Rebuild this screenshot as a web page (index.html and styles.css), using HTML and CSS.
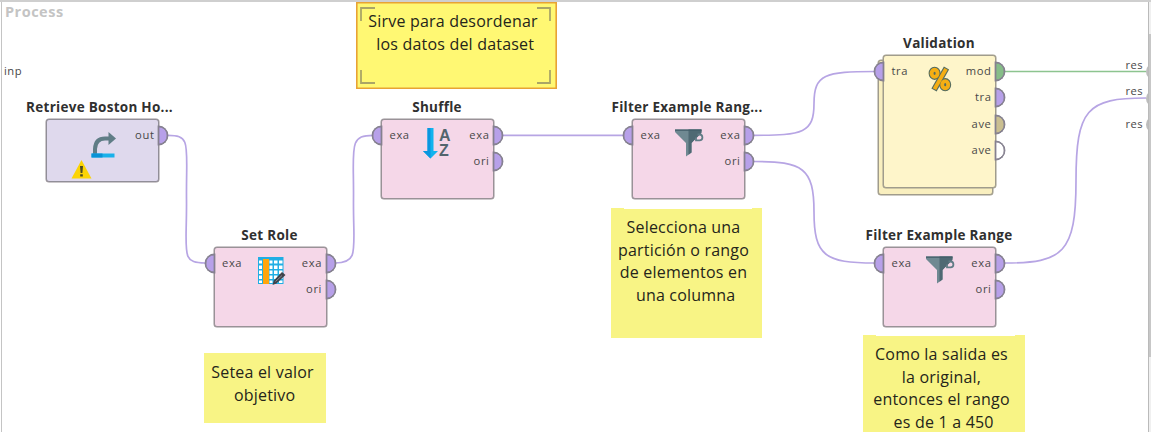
FILE: index.html
```html
<!DOCTYPE html>
<html lang="es">
<head>
<meta charset="utf-8">
<title>Process</title>
<link rel="stylesheet" href="styles.css">
</head>
<body>
<main class="canvas">
  <h1 class="process">Process</h1>
  <svg class="wires" width="1151" height="432" viewBox="0 0 1151 432">
    <g class="data">
      <path d="M168 135.300C192 135.300 186 145 186.500 199S180 263 205 263"/>
      <path d="M335 263C360 263 353 250 353.500 199S348 135.300 373 135.300"/>
      <path d="M503 135.300H624"/>
      <path d="M754 135.300C803 135.300 814 133 814 103.500S825 71.500 875 71.500"/>
      <path d="M754 161.500C803 161.500 814 168 814 212S825 263 875 263"/>
      <path d="M1005 263C1063 263 1076 253 1076 181S1087 98 1146 98"/>
    </g>
    <path class="model" d="M1005 71.500H1146"/>
  </svg>

  <span class="port-label inp">inp</span>
  <span class="port-label res res-1">res</span>
  <span class="port-label res res-2">res</span>
  <span class="port-label res res-3">res</span>

  <section class="node retrieve">
    <h2 class="title">Retrieve Boston Ho...</h2>
    <div class="box">
      <ul class="ports right"><li>out<i></i></li></ul>
      <svg class="icon" width="26" height="28" viewBox="0 0 26 28">
        <path d="M4 22V17Q4.500 6.500 14 6.500H18" fill="none" stroke="#607d86" stroke-width="4"/>
        <path d="M17.500 0l7.500 6.500L17.500 13z" fill="#607d86"/>
        <path d="M.500 21.500h23v4H.500z" fill="#19b1ea"/><path d="M.500 21.500h11v4H.500z" fill="#0992d6"/>
      </svg>
      <svg class="warning" width="21" height="19" viewBox="0 0 21 19">
        <path d="M10.500 0L20.500 18.500H.500z" fill="#fbd405"/>
        <path d="M9 6h3l-.6 7H9.600zM9.200 14.200h2.600v2.300H9.200z" fill="#4d4b20"/>
      </svg>
    </div>
  </section>

  <section class="node set-role">
    <h2 class="title">Set Role</h2>
    <div class="box">
      <ul class="ports left"><li>exa<i></i></li></ul>
      <svg class="icon" width="29" height="29" viewBox="0 0 29 29">
        <path d="M1 1h25.500v27H1z" fill="#20aee4"/>
        <path d="M2 4.500h3v3H2zm0 5h3v3.500H2zm0 5h3v3.500H2zm0 5h3v3.500H2zm0 5h3v2.500H2zM12.500 4.500h3v3h-3zm0 5h3v3.500h-3zm0 5h3v3.500h-3zm0 5h3v3.500h-3zm0 5h3v2.500h-3zM17 4.500h3.500v3H17zm0 5h3.500v3.500H17zm0 5h3.500v3.500H17zm0 5h3.500v3.500H17zm0 5h3.500v2.500H17zM22 4.500h3.500v3H22zm0 5h3.500v3.500H22zm0 5h3.500v3.500H22zm0 5h3.500v3.500H22zm0 5h3.500v2.500H22z" fill="#fff"/>
        <path d="M6 3h6v25H6z" fill="#ffa50c"/>
        <path d="M25 16l3.500 3-9 8.500-4 1.500 1.300-4.500z" fill="#40434b"/>
        <path d="M18.500 25.500l6.500-6" stroke="#8b8790"/>
      </svg>
      <ul class="ports right"><li>exa<i></i></li><li>ori<i></i></li></ul>
    </div>
  </section>

  <section class="node shuffle">
    <h2 class="title">Shuffle</h2>
    <div class="box">
      <ul class="ports left"><li>exa<i></i></li></ul>
      <div class="icon sort">
        <svg width="15" height="31" viewBox="0 0 15 31"><path d="M4.500 0h6v23H15l-7.500 7.500L0 23h4.500z" fill="#12b3ee"/><path d="M4.500 0h3v30.500L0 23h4.500z" fill="#0b96df"/></svg>
        <div class="letters"><b>A</b><b>Z</b></div>
      </div>
      <ul class="ports right"><li>exa<i></i></li><li>ori<i></i></li></ul>
    </div>
  </section>

  <section class="node filter-a">
    <h2 class="title">Filter Example Rang...</h2>
    <div class="box">
      <ul class="ports left"><li>exa<i></i></li></ul>
      <svg class="icon" width="30" height="28" viewBox="0 0 30 28">
        <path d="M0 .500h26.500v2.500L16.500 14v9.500L11 27.500V14L0 3z" fill="#6f8992"/>
        <path d="M13.500 .500h13V4L21 9.500 16.500 14v9.500l-3 2.200z" fill="#4e6973"/>
        <path d="M0 .500h26.500v1.300H0z" fill="#435e69"/>
        <path d="M22.500 5.500h2a2.900 2.900 0 0 1 0 5.800h-3.500V8.500" fill="none" stroke="#607c86" stroke-width="1.800"/>
      </svg>
      <ul class="ports right"><li>exa<i></i></li><li>ori<i></i></li></ul>
    </div>
  </section>

  <section class="node validation">
    <h2 class="title">Validation</h2>
    <div class="box">
      <ul class="ports left"><li>tra<i></i></li></ul>
      <svg class="icon" width="24" height="26" viewBox="0 0 24 26">
        <g fill="none" stroke="#536b60" stroke-width="6"><ellipse cx="6.600" cy="7.300" rx="3" ry="3.600"/><ellipse cx="17.200" cy="18.700" rx="3" ry="3.600"/><path d="M18.500 2L6 24"/></g>
        <g fill="none" stroke="#f5ae13" stroke-width="3.900"><path d="M18 2.900L6.500 23.100"/><ellipse cx="6.600" cy="7.300" rx="3" ry="3.600"/><ellipse cx="17.200" cy="18.700" rx="3" ry="3.600"/></g>
      </svg>
      <ul class="ports right"><li>mod<i class="green"></i></li><li>tra<i></i></li><li>ave<i class="tan"></i></li><li>ave<i class="white"></i></li></ul>
    </div>
  </section>

  <section class="node filter-b">
    <h2 class="title">Filter Example Range</h2>
    <div class="box">
      <ul class="ports left"><li>exa<i></i></li></ul>
      <svg class="icon" width="30" height="28" viewBox="0 0 30 28">
        <path d="M0 .500h26.500v2.500L16.500 14v9.500L11 27.500V14L0 3z" fill="#6f8992"/>
        <path d="M13.500 .500h13V4L21 9.500 16.500 14v9.500l-3 2.200z" fill="#4e6973"/>
        <path d="M0 .500h26.500v1.300H0z" fill="#435e69"/>
        <path d="M22.500 5.500h2a2.900 2.900 0 0 1 0 5.800h-3.500V8.500" fill="none" stroke="#607c86" stroke-width="1.800"/>
      </svg>
      <ul class="ports right"><li>exa<i></i></li><li>ori<i></i></li></ul>
    </div>
  </section>

  <p class="note note-shuffle">Sirve para desordenar<br>&nbsp;los datos del dataset
    <svg class="corners" width="192" height="78" viewBox="0 0 192 78"><path d="M1 14V1H15M177 1H190V14M1 63V76H15M177 76H190V63"/></svg>
  </p>
  <p class="note note-role">Setea el valor<br>&nbsp;objetivo</p>
  <p class="note notched note-filter">Selecciona una<br>partición o rango<br>de elementos en<br>&nbsp;una columna</p>
  <p class="note notched note-range">Como la salida es<br>la original,<br>entonces el rango<br>&nbsp;es de 1 a 450</p>

  <div class="result-ports"><i></i><i></i><i></i></div>
  <div class="scrollbar"></div>
</main>
</body>
</html>
```
FILE: styles.css
```css
* { box-sizing: border-box; }
body { margin: 0; overflow: hidden; background: #fff; font-family: "Open Sans", sans-serif; }
.canvas { position: relative; width: 1151px; height: 432px; overflow: hidden; border-top: 2px solid #cfcfcf; }
.canvas::before { content: ""; position: absolute; left: 1px; top: 0; width: 1px; height: 432px; background: #c4c4c4; }
.process { margin: 0; padding: 1px 0 0 5px; font-size: 14.500px; line-height: 18px; font-weight: 700; color: #c4c4c4; letter-spacing: .5px; }

.wires { position: absolute; left: 0; top: -2px; }
.wires path { fill: none; stroke: #b7a5e4; stroke-width: 1.7; }
.wires .model { stroke: #8dc48f; }

.port-label { position: absolute; font-size: 11.200px; line-height: 14px; color: #484848; letter-spacing: .5px; }
.inp { left: 4px; top: 62px; }
.res { left: 1125.500px; }
.res-1 { top: 56px; }
.res-2 { top: 82px; }
.res-3 { top: 115px; }

.node { position: absolute; width: 113px; display: flex; flex-direction: column; align-items: center; gap: 3px; }
.title { margin: 0 0 0 -6px; padding-top: 1px; font-size: 13.500px; line-height: 18px; font-weight: 700; color: #303030; white-space: nowrap; letter-spacing: .27px; }
.set-role .title, .shuffle .title, .filter-b .title, .validation .title { margin-left: -1px; }
.filter-a .title { margin-left: -3px; }
.box { position: relative; display: flex; justify-content: space-between; width: 113px; height: 80px; border: 1px solid #999297; border-radius: 3px; background: #f5d7e8; box-shadow: 0 0 0 .5px #999297; }
.retrieve { left: 46px; top: 95px; }
.set-role { left: 213.500px; top: 223px; }
.shuffle { left: 381px; top: 95px; }
.filter-a { left: 632px; top: 95px; }
.validation { left: 883px; top: 31px; }
.filter-b { left: 883px; top: 223px; }
.retrieve .box { height: 63px; background: #dfd9ed; border-color: #918e98; }
.validation .box { height: 133px; background: #fef5ca; border-color: #a09c8c; box-shadow: 0 0 0 .5px #a09c8c; }
.validation .box::before { content: ""; position: absolute; z-index: -1; left: -6px; top: 4px; width: 113px; height: 133px; border: 1px solid #a09c8c; border-radius: 3px; background: #f9efbf; box-shadow: 0 0 0 .5px #a09c8c; }

.ports { list-style: none; margin: 0; padding: 3px 0 0; display: flex; flex-direction: column; gap: 2.300px; font-size: 11.200px; color: #484848; letter-spacing: .6px; }
.ports li { position: relative; height: 24px; line-height: 24px; padding: 0 3.500px 0 7.500px; text-align: right; }
.ports i { position: absolute; top: 3px; width: 10px; height: 19px; border: 1px solid #85808f; background: #b7a0e9; box-shadow: 0 0 0 .4px #85808f, inset 0 0 0 .4px #85808f; }
.right { margin-left: auto; }
.right i { right: -10px; border-radius: 0 10px 10px 0; }
.left i { left: -10px; border-radius: 10px 0 0 10px; }
.ports .green { background: #86bd88; }
.ports .tan { background: #cabf91; }
.ports .white { background: #fff; }

.icon { position: absolute; left: 42px; top: 9px; }
.set-role .icon { top: 8px; }
.filter-b .icon { top: 8px; }
.retrieve .icon { left: 44px; top: 12px; }
.warning { position: absolute; left: 24px; top: 40px; }
.shuffle .icon { left: 41px; top: 8px; }
.validation .icon { left: 44px; top: 10px; }
.sort { display: flex; gap: 1px; }
.letters { display: flex; flex-direction: column; }
.letters b { font-family: "Liberation Sans", sans-serif; font-size: 16px; line-height: 15px; color: #52656d; }

.note { position: absolute; margin: 0; background: #f8f485; color: #25251a; font-size: 16px; line-height: 22.600px; letter-spacing: .2px; text-align: center; white-space: nowrap; }
.note-shuffle { left: 356px; top: 0; width: 201px; height: 87px; padding: 7px 7px 0 0; border: 1px solid #e8a334; background: #fff873; box-shadow: inset 0 0 0 .6px #e8a334; }
.note-role { left: 204px; top: 351px; width: 122px; height: 70px; padding: 8px 5px 0 0; }
.note-filter { left: 611px; top: 206px; width: 151px; height: 130px; padding: 8px 6px 0 0; }
.note-range { left: 863px; top: 333px; width: 162px; height: 110px; padding: 8px 5px 0 0; }
.notched::before { content: ""; position: absolute; left: 13px; right: 10px; top: 0; height: 1px; background: #fff; }
.corners { position: absolute; left: 3px; top: 4px; fill: none; stroke: #aaa566; stroke-width: 1.800; }

.result-ports i { position: absolute; left: 1146px; width: 10px; height: 17px; border-radius: 9px 0 0 9px; background: #bdbdbd; top: 61px; }
.result-ports i:nth-child(2) { top: 88px; }
.result-ports i:nth-child(3) { top: 114px; }
.scrollbar { position: absolute; left: 1148px; top: 0; width: 3px; height: 432px; border-left: 1px solid #bababa; background: linear-gradient(#f0f0f0 32px, #c7c7c7 32px, #c7c7c7 355px, #f0f0f0 355px); }
```
